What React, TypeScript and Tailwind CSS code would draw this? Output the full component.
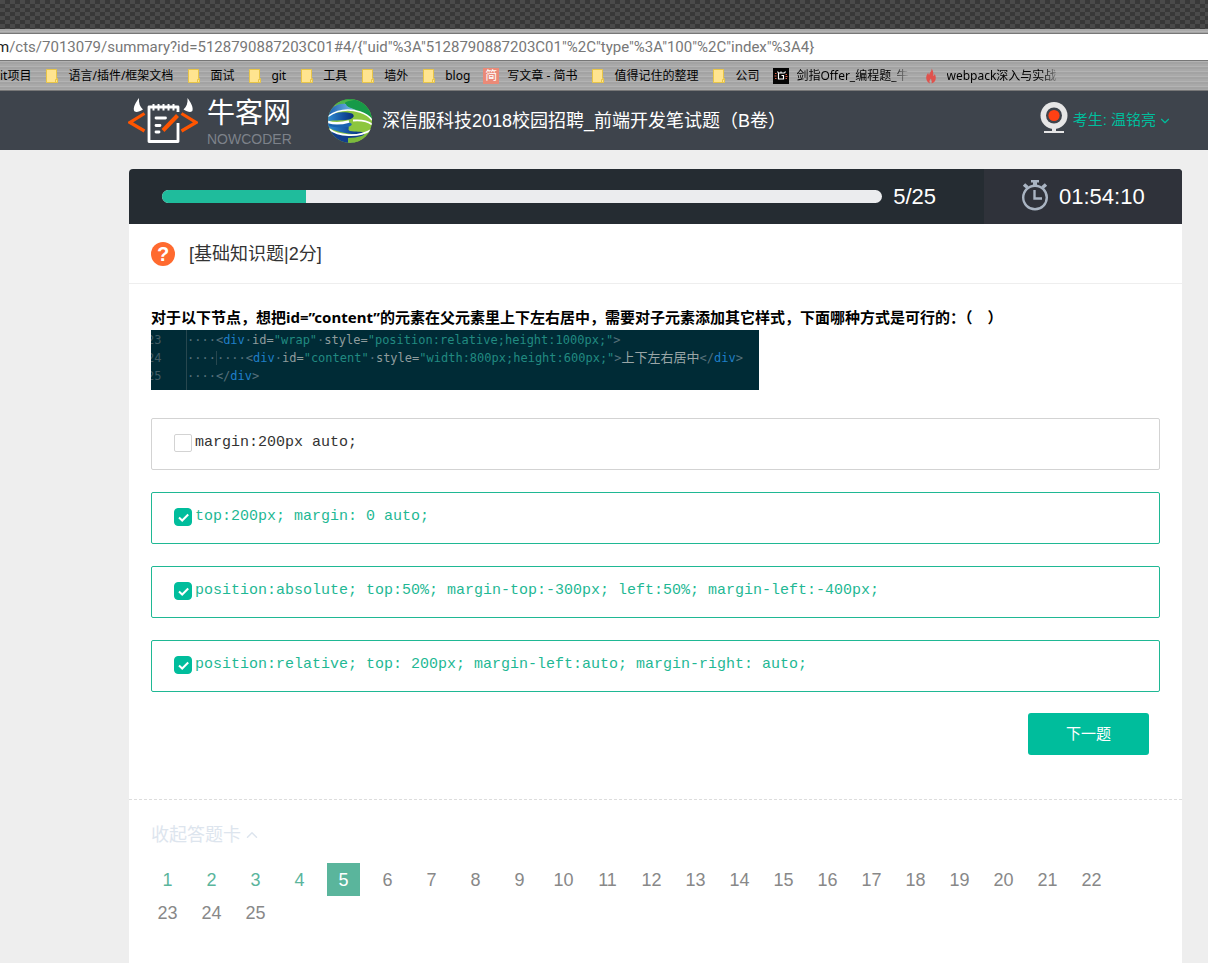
import { useState } from "react";
import { ChevronDown, ChevronUp } from "lucide-react";

type IconKind = "folder" | "jian" | "code" | "flame";

const bookmarks: { icon: IconKind; text: string; long?: boolean }[] = [
  { icon: "folder", text: "语言/插件/框架文档" },
  { icon: "folder", text: "面试" },
  { icon: "folder", text: "git" },
  { icon: "folder", text: "工具" },
  { icon: "folder", text: "墙外" },
  { icon: "folder", text: "blog" },
  { icon: "jian", text: "写文章 - 简书" },
  { icon: "folder", text: "值得记住的整理" },
  { icon: "folder", text: "公司" },
  { icon: "code", text: "剑指Offer_编程题_牛", long: true },
  { icon: "flame", text: "webpack深入与实战", long: true },
];

const options = [
  "margin:200px auto;",
  "top:200px; margin: 0 auto;",
  "position:absolute; top:50%; margin-top:-300px; left:50%; margin-left:-400px;",
  "position:relative; top: 200px; margin-left:auto; margin-right: auto;",
];

function BookmarkIcon({ kind }: { kind: IconKind }) {
  if (kind === "jian") {
    return (
      <span className="flex size-4 shrink-0 items-center justify-center bg-[#ea8a78] text-xs leading-4 text-white">
        简
      </span>
    );
  }
  if (kind === "code") {
    return (
      <svg viewBox="0 0 16 16" className="size-4 shrink-0" aria-hidden="true">
        <rect width="16" height="16" fill="#050505" />
        <path d="M5.500 5V11H10.500V7.500H8.500M5.500 5H11.500M5.500 5L4.500 3.500M8 5V3.500M11.500 5L12.500 3.500" fill="none" stroke="#fff" strokeWidth="1.2" />
        <path d="M2 5.500h1.500M1.500 8H3.500M2 10.500h1.500M12.500 6.500h1.500M12.500 8.500h2M12.500 10.500H14" stroke="#e0644c" strokeWidth="1.2" />
      </svg>
    );
  }
  if (kind === "flame") {
    return (
      <svg viewBox="0 0 16 16" className="size-4 shrink-0" aria-hidden="true">
        <path d="M8.500 0.500C9 3 6.500 4.500 6.200 7C5.500 6.500 5.200 5.500 5.300 4.500C3.800 6.500 3.200 8 3.200 10C3.400 12.500 4.500 14.500 7 15.500C6 13.500 6.500 12 8 10.500C8 12 9 12.500 8.700 15.500C11.500 14.500 13 12.500 12.800 9.500C12.700 8 12.200 7 11.800 6C11.500 7 11 7.800 10.200 8.200C10.800 5 10 2 8.500 0.500Z" fill="#e0524d" />
      </svg>
    );
  }
  return (
    <svg viewBox="0 0 16 16" className="size-4 shrink-0" aria-hidden="true">
      <path d="M2.500 1.500H12.500V10.500H13.500V14.500H2.500Z" fill="#ffe48f" stroke="#e8c547" />
      <path d="M11.500 14.500V11.500H13.500" fill="none" stroke="#e8c547" />
    </svg>
  );
}

function OxLogo() {
  return (
    <svg viewBox="0 0 70 46" className="h-[46px] w-[70px] shrink-0" aria-hidden="true">
      <path d="M11 0C8 4 5 9 6 12.500C7 15 11 14 15 11.500C12 9 10.500 5 11 0Z" fill="#fff" />
      <path d="M59.500 0C62.500 4 65.500 9 64.500 12.500C63.500 15 59.500 14 55.500 11.500C58.500 9 60 5 59.500 0Z" fill="#fff" />
      <path d="M50 14V9H21V43.500H50V25" fill="none" stroke="#fff" strokeWidth="2.800" strokeLinejoin="round" />
      <path d="M25.500 6V12.500M30.500 6V12.500M35.500 6V12.500M40.500 6V12.500M45.500 6V12.500" stroke="#fff" strokeWidth="2" />
      <path d="M28 20H37.500M28 27.500H32M28 34H31" stroke="#fff" strokeWidth="2.800" strokeLinecap="round" />
      <path d="M35 32.500L49.500 17.500" stroke="#ff5500" strokeWidth="4" />
      <path d="M16.500 15.500L2 24.500L16.500 33M53.500 15.500L68 24.500L53.500 33" fill="none" stroke="#ff5500" strokeWidth="3.200" />
    </svg>
  );
}

function Globe() {
  return (
    <svg viewBox="0 0 44 44" className="size-11 shrink-0" aria-hidden="true">
      <defs>
        <clipPath id="ball"><circle cx="22" cy="22" r="22" /></clipPath>
        <linearGradient id="blue" x1="0" x2="1" y1="0" y2="0">
          <stop offset="0" stopColor="#2f8bd0" />
          <stop offset="0.600" stopColor="#144f9e" />
          <stop offset="1" stopColor="#0a2f78" />
        </linearGradient>
        <linearGradient id="sky" x1="0" x2="1" y1="0" y2="0">
          <stop offset="0" stopColor="#1c5fae" />
          <stop offset="1" stopColor="#7cc4ec" />
        </linearGradient>
      </defs>
      <g clipPath="url(#ball)">
        <rect width="44" height="44" fill="#8cc63e" />
        <path d="M8 0H36L44 10V20C38 14 30 12 22 9C18 7 16 5 17 3Z" fill="#169a48" />
        <path d="M6 6C10 1 20 0 26 1C18 2 15 4 17 6C12 5 8 6 6 6Z" fill="#4fb54a" />
        <path d="M0 15C4 6 12 4 18 5C18 8 24 9 28 11C20 10 8 11 0 18Z" fill="url(#sky)" />
        <path d="M0 17C8 12 18 13 24 14.500C27 16.500 26 19 21 20.500C12 22 6 21 0 22Z" fill="url(#blue)" />
        <path d="M0 24C6 26 12 27 20 27C22 29 19 31 22 32C28 33 33 32 36 34C30 36 20 35 12 33C6 31 2 30 0 28Z" fill="url(#blue)" />
        <path d="M0 23C8 24 14 24 20 23C24 24 26 26 20 28C12 29 6 28 0 27Z" fill="#1a63b0" />
        <path d="M2 31C12 37 26 38 37 34C34 40 30 42 25 44H8Z" fill="#123f8c" />
        <path d="M20 39C30 39 38 36 44 31V44H20Z" fill="#7dbb3c" />
        <path d="M0 17.500C10 10.500 22 10 32 13C38 15 42 18 44 21" fill="none" stroke="#fff" strokeWidth="1.500" />
        <path d="M0 23C8 25.500 14 24.500 21 22.500" fill="none" stroke="#fff" strokeWidth="2.400" />
        <path d="M25 21.500C32 21 40 22 44 25.500" fill="none" stroke="#fff" strokeWidth="1.800" />
        <path d="M1 30C10 37 30 39 43 31" fill="none" stroke="#fff" strokeWidth="1.800" />
      </g>
    </svg>
  );
}

function Webcam() {
  return (
    <svg viewBox="0 0 28 37" className="h-[37px] w-7 shrink-0" aria-hidden="true">
      <circle cx="14" cy="13.500" r="13.500" fill="#e6e6e6" />
      <circle cx="14" cy="13.500" r="8" fill="#3e444c" />
      <circle cx="14" cy="13.500" r="5.600" fill="#ff4014" />
      <path d="M12 26H16V29H24V31H4V29H12Z" fill="#e6e6e6" />
    </svg>
  );
}

function Stopwatch() {
  return (
    <svg viewBox="0 0 26 34" className="h-[34px] w-[26px] shrink-0" fill="none" stroke="#a9b4c2" aria-hidden="true">
      <circle cx="13" cy="17.500" r="11.800" strokeWidth="2.400" />
      <path d="M9 1.200H17" strokeWidth="2.400" />
      <path d="M13 1V6" strokeWidth="4" />
      <path d="M2 4.500L5.500 7.500M24 4.500L20.500 7.500" strokeWidth="3.600" />
      <path d="M12.500 10V18.500H20" strokeWidth="2.400" />
    </svg>
  );
}

const Tag = ({ children }: { children: string }) => <span className="text-[#1f7fc9]">{children}</span>;
const Attr = ({ children }: { children: string }) => <span className="text-[#8f9c9d]">{children}</span>;
const Str = ({ children }: { children: string }) => <span className="text-[#218a81]">{children}</span>;

function CodeShot() {
  return (
    <div className="flex w-[608px] max-w-full overflow-hidden bg-[#002b36] font-['DejaVu_Sans_Mono','Noto_Sans_CJK_SC',monospace] text-xs leading-[18px] whitespace-pre text-[#56707a]">
      <div className="h-[60px] w-9 overflow-hidden border-r border-[#27474f] pt-px">
        <div className="-ml-1 text-[#435c64]">
          <div>23</div>
          <div>24</div>
          <div>25</div>
        </div>
      </div>
      <div className="pt-px">
        <div>····&lt;<Tag>div</Tag>·<Attr>id=</Attr><Str>"wrap"</Str>·<Attr>style=</Attr><Str>"position:relative;height:1000px;"</Str>&gt;</div>
        <div>····<span className="border-l border-[#27474f]">····</span>&lt;<Tag>div</Tag>·<Attr>id=</Attr><Str>"content"</Str>·<Attr>style=</Attr><Str>"width:800px;height:600px;"</Str>&gt;<span className="text-[13px] text-[#9aa6a7]">上下左右居中</span>&lt;/<Tag>div</Tag>&gt;</div>
        <div>····&lt;/<Tag>div</Tag>&gt;</div>
      </div>
    </div>
  );
}

export default function App() {
  const [checked, setChecked] = useState([false, true, true, true]);
  const [url, setUrl] = useState(
    '/cts/7013079/summary?id=5128790887203C01#4/{"uid"%3A"5128790887203C01"%2C"type"%3A"100"%2C"index"%3A4}'
  );
  const toggle = (i: number) => setChecked(checked.map((c, j) => (j === i ? !c : c)));

  return (
    <div className="flex min-h-screen flex-col bg-[#eeeeee] font-['Liberation_Sans','Noto_Sans_CJK_SC',sans-serif] text-[#333]">
      <div className="h-[29px] bg-[repeating-conic-gradient(#383838_0_25%,#4a4a4a_0_50%)] bg-size-[10px_8px]" />
      <div className="bg-[repeating-linear-gradient(#a9a9a9_0_2px,#b3b3b3_2px_3px,#a3a3a3_3px_5px)] pt-1 font-['Noto_Sans','Noto_Sans_CJK_SC',sans-serif]">
        <div className="flex h-7 items-center border-y border-[#777] bg-white font-[Roboto,sans-serif] text-[15px]">
          <span className="-ml-1 text-[#222]">m</span>
          <input
            aria-label="地址"
            value={url}
            onChange={(e) => setUrl(e.target.value)}
            className="min-w-0 flex-1 text-[#777] outline-none"
          />
        </div>
        <nav className="flex h-[30px] items-center gap-[13px] overflow-hidden border-b border-[#777] pt-px text-xs whitespace-nowrap text-black">
          <a href="#">it项目</a>
          {bookmarks.map((b) => (
            <a key={b.text} href="#" className="flex items-center gap-2">
              <BookmarkIcon kind={b.icon} />
              <span className={b.long ? "min-w-[113px] mask-r-from-85% mask-r-to-100%" : ""}>{b.text}</span>
            </a>
          ))}
        </nav>
      </div>

      <header className="flex h-[59px] items-center bg-[#3e444c] pr-9 pl-32 text-white">
        <a href="#" className="flex items-center gap-[9px]">
          <OxLogo />
          <span className="flex w-[85px] flex-col pt-1">
            <span className="text-[28px] leading-8">牛客网</span>
            <span className="text-sm leading-[18px] text-[#7d828a]">NOWCODER</span>
          </span>
        </a>
        <div className="ml-9 flex items-center gap-[10px]">
          <Globe />
          <h1 className="text-lg">深信服科技2018校园招聘_前端开发笔试题（B卷）</h1>
        </div>
        <div className="ml-auto flex items-center gap-[5px]">
          <Webcam />
          <button type="button" className="flex items-center gap-[2px] text-[15px] text-[#00bd9c]">
            考生: 温铭亮
            <ChevronDown className="size-[14px]" />
          </button>
        </div>
      </header>

      <main className="mt-[19px] mr-[26px] ml-[129px] flex-1 rounded-t bg-white">
        <div className="flex h-[55px] overflow-hidden rounded-t bg-[#252c32] text-[22px] text-white">
          <div className="flex flex-1 items-center gap-[11px] pr-12 pl-[33px]">
            <div className="h-[13px] flex-1 overflow-hidden rounded-full bg-[#ebecee]">
              <div className="h-full w-1/5 bg-[#1fbc9c]" />
            </div>
            <span>5/25</span>
          </div>
          <div className="flex w-[198px] items-center gap-[11px] bg-[#2f323a] pl-[38px]">
            <Stopwatch />
            <time>01:54:10</time>
          </div>
        </div>

        <div className="flex h-[60px] items-center gap-[14px] border-b border-[#eee] px-[22px]">
          <span className="flex size-6 items-center justify-center rounded-full bg-[#ff6a2f] text-xl font-bold text-white">?</span>
          <h2 className="text-lg">[基础知识题|2分]</h2>
        </div>

        <form className="px-[22px] pt-[21px] pb-11" onSubmit={(e) => e.preventDefault()}>
          <p className="font-['Noto_Sans','Noto_Sans_CJK_SC',sans-serif] text-[15px] leading-[25px] font-bold text-black">
            对于以下节点，想把id=”content”的元素在父元素里上下左右居中，需要对子元素添加其它样式，下面哪种方式是可行的：（　）
          </p>
          <CodeShot />
          <div className="mt-7 flex flex-col gap-[22px]">
            {options.map((text, i) => (
              <label
                key={text}
                className={
                  "flex h-[52px] items-center gap-[3px] rounded-xs border pb-[2px] pl-[22px] font-['Liberation_Mono',monospace] text-[15px] " +
                  (checked[i] ? "border-[#1fb894] text-[#1fb894]" : "border-[#d3d3d3] text-[#333]")
                }
              >
                <span className="grid size-[18px] shrink-0">
                  <input
                    type="checkbox"
                    checked={checked[i]}
                    onChange={() => toggle(i)}
                    className="col-start-1 row-start-1 size-[18px] appearance-none rounded-xs border border-[#d3d3d3] bg-white checked:rounded-[4px] checked:border-[#00bd9c] checked:bg-[#00bd9c]"
                  />
                  {checked[i] && (
                    <svg viewBox="0 0 18 18" className="pointer-events-none col-start-1 row-start-1 size-[18px]" aria-hidden="true">
                      <path d="M5 9.500L8.200 12.500L14.200 6.500" fill="none" stroke="#fff" strokeWidth="2" />
                    </svg>
                  )}
                </span>
                <span>{text}</span>
              </label>
            ))}
          </div>
          <div className="mt-[21px] flex justify-end pr-[11px]">
            <button type="submit" className="h-[42px] w-[121px] rounded-[3px] bg-[#00bd9c] text-[15px] text-white">
              下一题
            </button>
          </div>
        </form>

        <section className="border-t border-dashed border-[#ddd] pt-[21px] pr-[43px] pb-8 pl-[22px]">
          <button type="button" className="flex items-center gap-[2px] text-lg text-[#dde5ee]">
            收起答题卡
            <ChevronUp className="size-[18px]" />
          </button>
          <div className="mt-[14px] flex flex-wrap gap-x-[11px] text-lg">
            {Array.from({ length: 25 }, (_, i) => i + 1).map((n) => (
              <button
                key={n}
                type="button"
                className={
                  "size-[33px] " +
                  (n === 5 ? "bg-[#5ab59c] text-white" : n < 5 ? "text-[#5ab59c]" : "text-[#888]")
                }
              >
                {n}
              </button>
            ))}
          </div>
        </section>
      </main>
    </div>
  );
}
